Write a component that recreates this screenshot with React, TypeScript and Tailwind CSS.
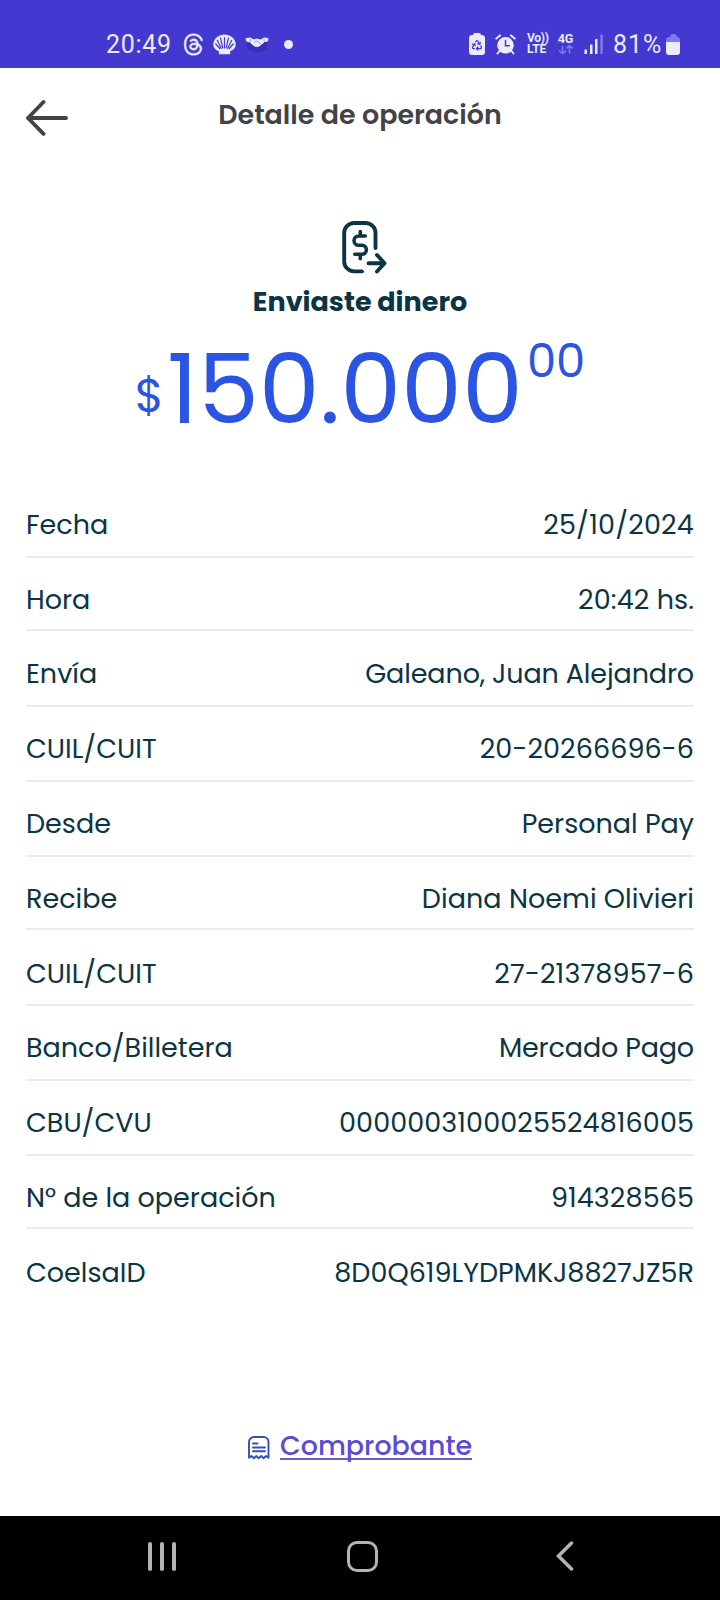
import { clsx } from "clsx";
import { FaThreads } from "react-icons/fa6";
import { LuRecycle } from "react-icons/lu";

type Detail = {
  label: string;
  value: string;
  tight?: boolean;
  valueClass?: string;
};

const details: Detail[] = [
  { label: "Fecha", value: "25/10/2024", valueClass: "tracking-[0.2px]" },
  { label: "Hora", value: "20:42 hs.", tight: true, valueClass: "tracking-[0.1px]" },
  { label: "Envía", value: "Galeano, Juan Alejandro", valueClass: "tracking-[-0.13px]" },
  { label: "CUIL/CUIT", value: "20-20266696-6", valueClass: "tracking-[0.1px]" },
  { label: "Desde", value: "Personal Pay" },
  { label: "Recibe", value: "Diana Noemi Olivieri", tight: true, valueClass: "tracking-[0.05px]" },
  { label: "CUIL/CUIT", value: "27-21378957-6", valueClass: "tracking-[0.15px]" },
  { label: "Banco/Billetera", value: "Mercado Pago", valueClass: "tracking-[-0.15px]" },
  { label: "CBU/CVU", value: "0000003100025524816005", valueClass: "tracking-[0.1px]" },
  { label: "N° de la operación", value: "914328565", tight: true, valueClass: "tracking-[0.1px]" },
  { label: "CoelsaID", value: "8D0Q619LYDPMKJ8827JZ5R" },
];

function ShellIcon() {
  return (
    <svg width="23" height="21" viewBox="0 0 23 21" fill="none">
      <path
        d="M6.5 19.5v-3C3.5 16.5 1 13.5 1 10.5 1 5.5 5.5 1.2 11.5 1.2S22 5.5 22 10.5c0 3-2.5 6-5.5 6v3z"
        fill="#ecebfc"
        stroke="#ecebfc"
        strokeWidth="1.4"
        strokeLinejoin="round"
      />
      <path
        d="M11.5 14V3.5M9.8 14 7.5 4M13.2 14l2.3-10M8.2 14.3 4.3 6.3M14.8 14.3l3.9-8M6.8 14.5 2.8 10M16.2 14.5l4-4.5"
        stroke="#4338d0"
        strokeWidth="1.2"
        strokeLinecap="round"
      />
    </svg>
  );
}

function HandshakeIcon() {
  return (
    <svg width="24" height="17" viewBox="0 0 24 17" fill="none">
      <ellipse cx="12" cy="9" rx="11" ry="7" fill="#3a2fb4" />
      <path
        d="M1 2.5 5.5 2l3 1.8L12 3l3.5 1L19 2l4 .5-.5 2.5-3 .5-2.5 2.5-3.5 2.3-3 .2-3-2L5 6 1.5 5z"
        fill="#ecebfc"
        stroke="#ecebfc"
        strokeLinejoin="round"
      />
      <path d="M9 6.5 12 5l4.5 3.5M5.5 3v3M19 3v2.5" stroke="#8a84dc" strokeWidth="0.8" />
    </svg>
  );
}

function AlarmIcon() {
  return (
    <svg width="21" height="21" viewBox="0 0 21 21" fill="none" strokeLinecap="round">
      <path d="M1.3 4.6 5 1.4M19.7 4.6 16 1.4M4.5 17l-2 2.5M16.5 17l2 2.5" stroke="#ecebfc" strokeWidth="2" />
      <circle cx="10.5" cy="11.3" r="8.3" fill="#ecebfc" />
      <path d="M10.5 6.5v5.3h3.8" stroke="#4338d0" strokeWidth="1.5" />
    </svg>
  );
}

function SignalIcon() {
  return (
    <svg width="20" height="21" viewBox="0 0 20 21">
      <rect x="0.5" y="15.5" width="2.5" height="4.5" rx="0.5" fill="#ecebfc" />
      <rect x="6" y="10.5" width="2.5" height="9.5" rx="0.5" fill="#ecebfc" />
      <rect x="11" y="5" width="2.5" height="15" rx="0.5" fill="#ecebfc" />
      <rect x="16.3" y="0.5" width="2.5" height="19.5" rx="0.5" fill="#8078ee" />
    </svg>
  );
}

function StatusBar() {
  return (
    <div className="flex h-17 items-center justify-between bg-[#4338d0] pt-5 pr-10 pl-[106px] font-['Roboto',sans-serif] text-[25px] text-[#ecebfc]">
      <div className="flex items-center">
        <span className="w-[77px] pt-0.5 tracking-[0.7px]">20:49</span>
        <FaThreads className="h-[23px] w-[21px] stroke-[#ecebfc] stroke-[10]" />
        <span className="ml-[9px]">
          <ShellIcon />
        </span>
        <span className="ml-[9px]">
          <HandshakeIcon />
        </span>
        <span className="ml-[15px] size-[9px] rounded-full bg-[#ecebfc]" />
      </div>
      <div className="flex items-center">
        <span className="flex w-4 flex-col items-center">
          <span className="h-0.5 w-2 rounded-t-sm bg-[#ecebfc]" />
          <span className="flex h-5 w-4 items-center justify-center rounded-[3px] bg-[#ecebfc] text-[#4338d0]">
            <LuRecycle className="size-3" strokeWidth={2.5} />
          </span>
        </span>
        <span className="ml-2.5">
          <AlarmIcon />
        </span>
        <span className="ml-[11px] flex w-[22px] flex-col text-[12px] leading-[11.5px] font-bold">
          <span className="tracking-[-0.3px] whitespace-nowrap">Vo))</span>
          <span>LTE</span>
        </span>
        <span className="ml-2 flex w-[17px] flex-col items-center text-[12.5px] leading-[11px] font-bold">
          <span>4G</span>
          <svg width="16" height="11" viewBox="0 0 16 11" fill="none" stroke="#8078ee" strokeWidth="1.6">
            <path d="M4.5 1.5v8M1 6.5l3.5 3L8 6.5M11.5 9.5v-8M8 4.5l3.5-3 3.5 3" />
          </svg>
        </span>
        <span className="ml-2.5">
          <SignalIcon />
        </span>
        <span className="ml-[9px] w-[53px] pt-0.5 tracking-[0.9px]">81%</span>
        <span className="flex w-3.5 flex-col items-center">
          <span className="h-[3px] w-[7px] rounded-t-sm bg-[#8078ee]" />
          <span className="h-[5px] w-3.5 rounded-t-[3px] bg-[#8078ee]" />
          <span className="h-[13px] w-3.5 rounded-b-[3px] bg-[#ecebfc]" />
        </span>
      </div>
    </div>
  );
}

function SendMoneyIcon() {
  return (
    <svg
      className="ml-2.5"
      width="46"
      height="54"
      viewBox="0 0 46 54"
      fill="none"
      stroke="#0b3544"
      strokeWidth="3.9"
      strokeLinecap="round"
      strokeLinejoin="round"
    >
      <path d="M33.5 28V13a10 10 0 0 0-10-10H12.2a10 10 0 0 0-10 10v28.4a10 10 0 0 0 10 10H20" />
      <path d="M26.5 43.3H42M35 35l7.5 8.3L35 51.5" />
      <path d="M23.3 16H16.7a4.65 4.65 0 0 0 0 9.3h3.2a4.5 4.5 0 0 1 0 9H12.8M18.3 11.5V16M18.3 34.3v4.5" strokeWidth="3.6" />
    </svg>
  );
}

function ReceiptIcon() {
  return (
    <svg
      width="22"
      height="24"
      viewBox="0 0 22 24"
      fill="none"
      stroke="#3450b8"
      strokeWidth="1.9"
      strokeLinecap="round"
      strokeLinejoin="round"
    >
      <path d="M1 21.8V6a5 5 0 0 1 5-5h9.5a5 5 0 0 1 5 5v15.8L18.1 20l-2.5 2.3-2.4-2.3-2.5 2.3L8.300 20l-2.4 2.3L3.4 20z" />
      <path d="M5 7.5h4.5M5 11.5h12M5 15.3h12" />
    </svg>
  );
}

function DetailRow({ label, value, tight, valueClass, last }: Detail & { last: boolean }) {
  return (
    <div className="h-[74.8px] pt-[21.2px]">
      <div className="flex justify-between text-[27px] leading-10 whitespace-nowrap">
        <span>{label}</span>
        <span className={valueClass}>{value}</span>
      </div>
      {!last && <div className={clsx("h-0.5 bg-[#ebebeb]", tight ? "mt-[9.3px]" : "mt-[10.8px]")} />}
    </div>
  );
}

function NavigationBar() {
  return (
    <div className="flex h-21 items-center justify-between bg-black pr-[146px] pb-1 pl-[148px]">
      <div className="flex h-[29px] w-7 justify-between">
        <span className="w-1 rounded-full bg-[#b4b4b4]" />
        <span className="w-1 rounded-full bg-[#b4b4b4]" />
        <span className="w-1 rounded-full bg-[#b4b4b4]" />
      </div>
      <div className="mr-[7px] size-[31px] rounded-[10px] border-[3px] border-[#b4b4b4]" />
      <svg width="18" height="30" viewBox="0 0 18 30" fill="none" stroke="#b4b4b4" strokeWidth="3.5" strokeLinecap="round">
        <path d="M15.5 2 2.5 15l13 13" />
      </svg>
    </div>
  );
}

export default function App() {
  return (
    <div className="flex h-[1600px] w-[720px] flex-col bg-white font-['Poppins','Inter',sans-serif] text-[#0b3544]">
      <StatusBar />

      <header className="flex h-[152px] items-start pr-[70px] pl-[26px]">
        <svg
          className="mt-[31px]"
          width="44"
          height="38"
          viewBox="0 0 44 38"
          fill="none"
          stroke="#434247"
          strokeWidth="3.9"
          strokeLinecap="round"
          strokeLinejoin="round"
        >
          <path d="M40 19H2M17.5 3 2 19l15.5 15.8" />
        </svg>
        <h1 className="mt-[26.5px] flex-1 text-center text-[26.9px] leading-10 font-semibold text-[#434247]">
          Detalle de operación
        </h1>
      </header>

      <section className="flex flex-col items-center">
        <SendMoneyIcon />
        <h2 className="mt-2 text-[27px] leading-10 font-bold">Enviaste dinero</h2>
        <div className="mt-3.5 flex items-start text-[#2b54e2]">
          <span className="mt-9 text-[47px] leading-[48px]">$</span>
          <span className="mt-[3px] mr-1 ml-[3px] text-[97px] leading-[100px]">150.000</span>
          <span className="mt-px text-[46.5px] leading-[48px]">00</span>
        </div>
      </section>

      <section className="mt-[44.6px] px-[26px]">
        {details.map((detail, index) => (
          <DetailRow key={`${detail.label}-${index}`} {...detail} last={index === details.length - 1} />
        ))}
      </section>

      <div className="mt-auto flex h-[91px] items-start justify-center gap-2.5">
        <span className="mt-[11px]">
          <ReceiptIcon />
        </span>
        <a className="text-[26.9px] leading-[42px] font-medium text-[#5b4bd5] underline decoration-[#6a5ccd] decoration-[1.5px] underline-offset-[3px] [text-decoration-skip-ink:none]">
          Comprobante
        </a>
      </div>

      <NavigationBar />
    </div>
  );
}
